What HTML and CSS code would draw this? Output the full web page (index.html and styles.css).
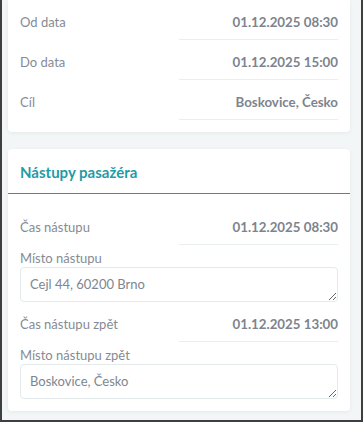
FILE: index.html
```html
<!DOCTYPE html>
<html>
<head>
	<title>Detail jízdy</title>
	<link rel="stylesheet" href="styles.css">
</head>
<body>
<div class="frame">
  <div class="card card-top">
    <div class="row">
      <div class="label">Od data</div>
      <div class="value">01.12.2025 08:30</div>
    </div>
    <div class="row">
      <div class="label">Do data</div>
      <div class="value">01.12.2025 15:00</div>
    </div>
    <div class="row">
      <div class="label">Cíl</div>
      <div class="value">Boskovice, Česko</div>
    </div>
  </div>

  <div class="card">
    <div class="card-header">Nástupy pasažéra</div>
    <div class="card-body">
      <div class="row">
        <div class="label">Čas nástupu</div>
        <div class="value">01.12.2025 08:30</div>
      </div>
      <div class="field">
        <label>Místo nástupu</label>
        <textarea>Cejl 44, 60200 Brno</textarea>
      </div>
      <div class="row">
        <div class="label">Čas nástupu zpět</div>
        <div class="value">01.12.2025 13:00</div>
      </div>
      <div class="field">
        <label>Místo nástupu zpět</label>
        <textarea>Boskovice, Česko</textarea>
      </div>
    </div>
  </div>
</div>
</body>
</html>
```

FILE: styles.css
```css
html {
  box-sizing: border-box;
}
*,
*:before,
*:after {
  box-sizing: inherit;
}
body {
  margin: 0;
  font-family: Lato, "Noto Sans", sans-serif;
  color: #858b94;
}
.frame {
  height: 422px;
  overflow: hidden;
  padding: 0 11px 0 6px;
  background-color: #f2f6f6;
  border: 2px solid #3d3f40;
  border-top: none;
}
.card {
  background-color: #fff;
  border-radius: 4px;
  box-shadow: 0 1px 4px rgba(0, 0, 0, 0.06);
  margin-bottom: 17px;
}
.card-top {
  border-top-left-radius: 0;
  border-top-right-radius: 0;
  padding: 0 12px 12px;
}
.row {
  display: flex;
  height: 40px;
  font-size: 13px;
}
.label {
  width: 50%;
  padding-top: 13px;
  line-height: 18px;
}
.value {
  width: 50%;
  padding-top: 13px;
  line-height: 18px;
  text-align: right;
  font-weight: bold;
  font-size: 13.3px;
  color: #7d848e;
  border-bottom: 1px solid #e9eff0;
}
.card-header {
  height: 45px;
  padding: 14px 12px 0;
  font-size: 15px;
  font-weight: bold;
  color: #1f9ba7;
  border-bottom: 1px solid #2a97a2;
}
.card-body {
  padding: 11px 12px 12px;
}
.field {
  padding-top: 4px;
}
.field label {
  display: block;
  font-size: 13px;
  line-height: 18px;
}
.field textarea {
  display: block;
  width: 100%;
  height: 35px;
  padding: 7px 9px;
  border: 1px solid #e4eaec;
  border-radius: 4px;
  font-family: inherit;
  font-size: 13px;
  line-height: 18px;
  color: #80868f;
  outline: none;
}
```
